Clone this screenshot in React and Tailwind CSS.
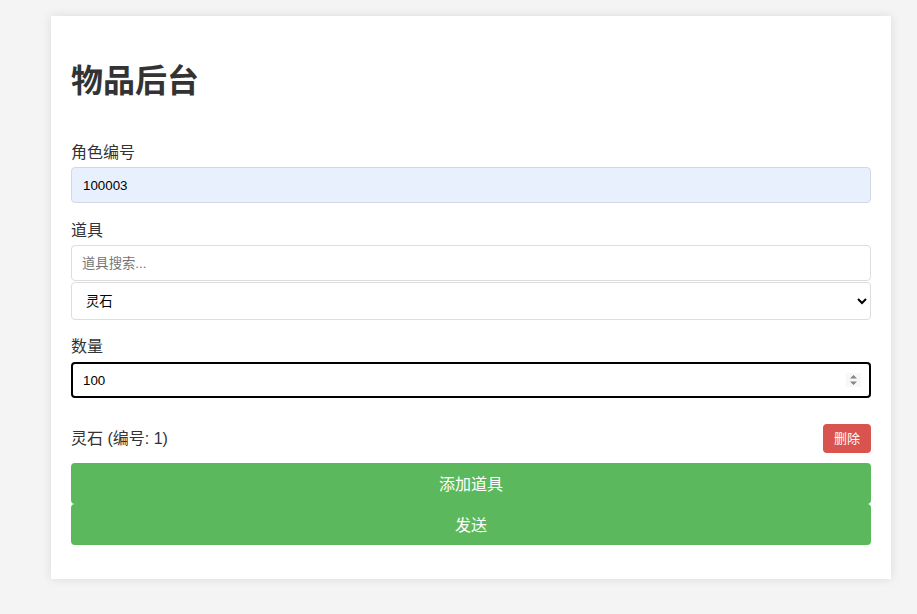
import React from 'react';

function Label({ children, mb = 'mb-[4px]' }) {
  return <label className={`block text-[16px] leading-[21px] text-[#333] ${mb}`}>{children}</label>;
}

export default function App() {
  return (
    <div className="min-h-[614px] bg-[#f4f4f4] pt-[16px] pb-[35px] font-['Liberation_Sans','Noto_Sans_CJK_SC',sans-serif]">
      <div className="ml-[51px] w-[840px] bg-white px-[20px] pt-[20px] pb-[34px] shadow-[0_0_10px_rgba(0,0,0,0.1)]">
        <h1 className="mt-[27px] mb-[42px] text-[32px] leading-[37px] font-bold text-[#333]">物品后台</h1>

        {/* Character id */}
        <div className="mb-[17px]">
          <Label>角色编号</Label>
          <input
            type="text"
            defaultValue="100003"
            className="block w-full h-[36px] px-[11px] border border-[#d3d9e2] rounded-[4px] bg-[#e8f0fe] text-[13.33px] text-black outline-none"
          />
        </div>

        {/* Item */}
        <div className="mb-[16px]">
          <Label>道具</Label>
          <input
            type="text"
            placeholder="道具搜索..."
            className="block w-full h-[36px] px-[10px] border border-[#ddd] rounded-[4px] bg-white text-[13.33px] text-black placeholder:text-[#757575] outline-none"
          />
          <select
            defaultValue="1"
            className="block w-full h-[38px] mt-[1px] px-[10px] border border-[#ddd] rounded-[4px] bg-white text-[13.33px] text-black outline-none"
          >
            <option value="1">灵石</option>
          </select>
        </div>

        {/* Amount */}
        <div className="mb-[26px]">
          <Label mb="mb-[5px]">数量</Label>
          <div className="relative">
            <input
              type="text"
              defaultValue="100"
              className="block w-full h-[36px] px-[10px] border-2 border-black rounded-[4px] bg-white text-[13.33px] text-black outline-none"
            />
            <div className="absolute right-[10px] top-[11px] w-[15px] h-[14px] bg-[#f7f7f7] flex items-center justify-center">
              <svg width="9" height="12" viewBox="0 0 9 12">
                <path d="M4.5 1 L8 4.5 L1 4.5 Z" fill="#858585" />
                <path d="M4.5 11 L8 7.5 L1 7.5 Z" fill="#858585" />
              </svg>
            </div>
          </div>
        </div>

        {/* Selected items */}
        <div className="flex items-center justify-between h-[29px] mb-[10px]">
          <span className="text-[16px] text-[#333] pt-[1px]">灵石 (编号: 1)</span>
          <button className="h-[29px] w-[48px] rounded-[4px] bg-[#d9534f] text-white text-[13px]">删除</button>
        </div>

        <button className="block w-full h-[41px] pt-[3px] rounded-[4px] bg-[#5cb85c] text-white text-[16px]">添加道具</button>
        <button className="block w-full h-[41px] pt-[3px] rounded-[4px] bg-[#5cb85c] text-white text-[16px]">发送</button>
      </div>
    </div>
  );
}
